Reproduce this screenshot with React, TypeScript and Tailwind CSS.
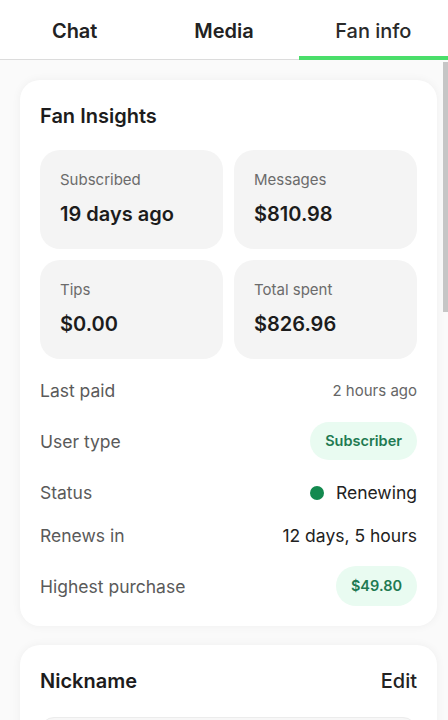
import React from "react";

function Tile({ label, value }: { label: string; value: string }) {
  return (
    <div className="h-[99px] rounded-[20px] bg-[#f4f4f4] pl-5 pt-[20px]">
      <div className="h-5 text-[15px] leading-5 text-[#6b6b6b]">{label}</div>
      <div className="mt-[10px] h-7 text-[20px] font-semibold leading-7 text-[#1c1c1c]">{value}</div>
    </div>
  );
}

export default function App() {
  return (
    <div
      className="relative h-[720px] w-[448px] overflow-hidden bg-[#fafafa]"
      style={{ fontFamily: "Inter, 'Noto Sans', sans-serif" }}
    >
      <div className="flex h-[60px] border-b border-[#dcdcdc] bg-white">
        <div className="flex flex-1 items-center justify-center pt-[3px] text-[20px] font-semibold text-[#222]">Chat</div>
        <div className="flex flex-1 items-center justify-center pt-[3px] text-[20px] font-semibold text-[#222]">Media</div>
        <div className="relative flex flex-1 items-center justify-center pt-[3px] text-[20px] font-medium text-[#2a2a2a]">
          Fan info
          <div className="absolute bottom-[-1px] left-0 right-0 h-[4px] bg-[#4ade6a]" />
        </div>
      </div>

      <div className="ml-5 mr-[11px] mt-5 rounded-[20px] bg-white px-5 pb-5 pt-[16px] shadow-[0_0_10px_rgba(0,0,0,0.05)]">
        <div className="h-10 text-[20px] font-semibold leading-10 text-[#1c1c1c]">Fan Insights</div>
        <div className="mt-[14px] grid grid-cols-2 gap-[11px]">
          <Tile label="Subscribed" value="19 days ago" />
          <Tile label="Messages" value="$810.98" />
          <Tile label="Tips" value="$0.00" />
          <Tile label="Total spent" value="$826.96" />
        </div>
        <div className="mt-[11px] flex h-10 items-center justify-between pt-[2px]">
          <span className="text-[17.5px] text-[#5a5a5a]">Last paid</span>
          <span className="text-[15px] text-[#666]">2 hours ago</span>
        </div>
        <div className="mt-[11px] flex h-10 items-center justify-between">
          <span className="pt-[2px] text-[17.5px] text-[#5a5a5a]">User type</span>
          <span className="flex h-[38px] items-center rounded-full bg-[#e9fbf1] px-[15px] text-[14.5px] font-semibold text-[#1f7a52]">
            Subscriber
          </span>
        </div>
        <div className="mt-[11px] flex h-10 items-center justify-between pt-[2px]">
          <span className="text-[17.5px] text-[#5a5a5a]">Status</span>
          <span className="flex items-center gap-[12px] text-[17.5px] text-[#222]">
            <span className="h-[14px] w-[14px] rounded-full bg-[#13894f]" />
            Renewing
          </span>
        </div>
        <div className="mt-[3px] flex h-10 items-center justify-between pt-[2px]">
          <span className="text-[17.5px] text-[#5a5a5a]">Renews in</span>
          <span className="text-[17.5px] text-[#222]">12 days, 5 hours</span>
        </div>
        <div className="mt-[11px] flex h-10 items-center justify-between">
          <span className="pt-[2px] text-[17.5px] text-[#5a5a5a]">Highest purchase</span>
          <span className="flex h-10 items-center rounded-full bg-[#e9fbf1] px-[15px] text-[14.5px] font-semibold text-[#1f7a52]">
            $49.80
          </span>
        </div>
      </div>

      <div className="ml-5 mr-[11px] mt-[19px] rounded-[20px] bg-white px-5 pt-[16px] shadow-[0_0_10px_rgba(0,0,0,0.05)]">
        <div className="flex h-10 items-center justify-between">
          <span className="text-[20px] font-semibold text-[#1c1c1c]">Nickname</span>
          <span className="text-[20px] font-medium text-[#222]">Edit</span>
        </div>
        <div className="mt-[16px] h-12 rounded-[14px] border border-[#ececec] bg-[#f7f7f7]" />
      </div>

      <div className="absolute right-0 top-[62px] h-[250px] w-[5px] bg-[#c6c6c6]" />
    </div>
  );
}
